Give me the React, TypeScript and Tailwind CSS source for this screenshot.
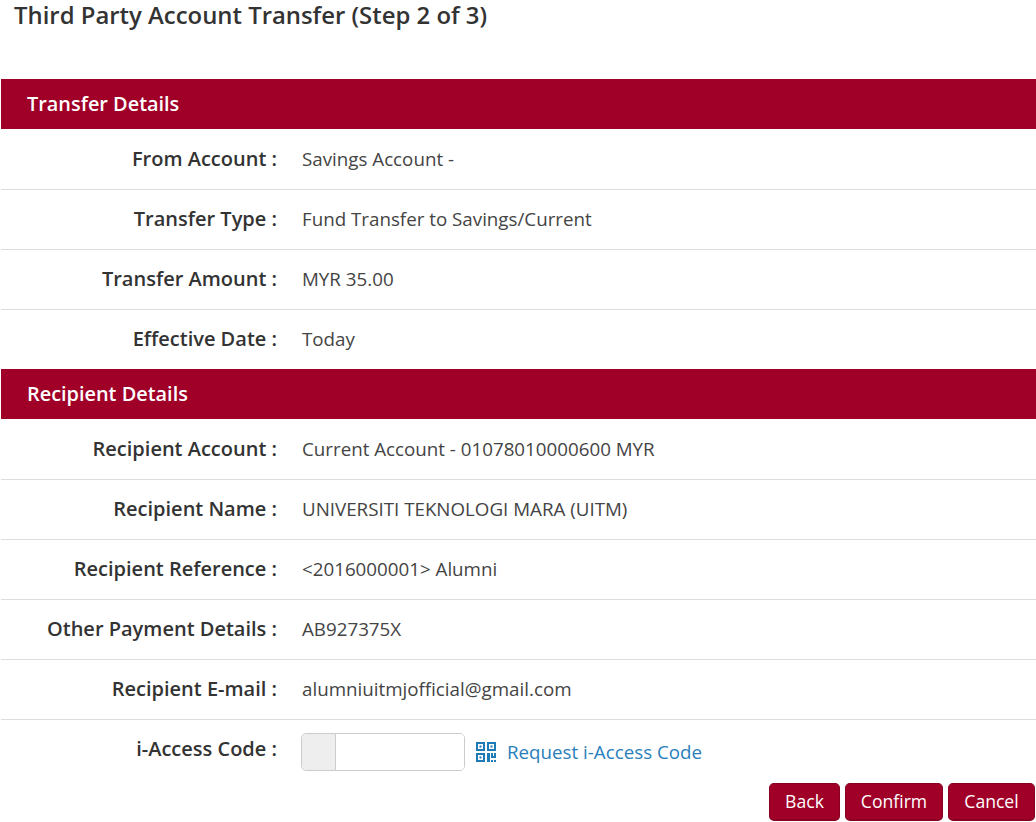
const transferRows = [
  { label: 'From Account :', value: 'Savings Account -' },
  { label: 'Transfer Type :', value: 'Fund Transfer to Savings/Current' },
  { label: 'Transfer Amount :', value: 'MYR 35.00' },
  { label: 'Effective Date :', value: 'Today' },
]

const recipientRows = [
  { label: 'Recipient Account :', value: 'Current Account - 01078010000600 MYR' },
  { label: 'Recipient Name :', value: 'UNIVERSITI TEKNOLOGI MARA (UITM)' },
  { label: 'Recipient Reference :', value: '<2016000001> Alumni' },
  { label: 'Other Payment Details :', value: 'AB927375X' },
  { label: 'Recipient E-mail :', value: 'alumniuitmjofficial@gmail.com' },
]

function SectionHeader({ title }: { title: string }) {
  return (
    <div className="flex h-[50px] items-center bg-[#a00028] pl-[26px] text-[19.9px] font-semibold text-white">
      {title}
    </div>
  )
}

function Row({ label, value, first }: { label: string; value: string; first?: boolean }) {
  return (
    <div className={`flex h-[60px] items-center ${first ? '' : 'border-t border-[#dddddd]'}`}>
      <div className={`w-[276px] text-right text-[20px] font-semibold text-[#333333] ${first ? '' : 'pb-[2px]'}`}>
        {label}
      </div>
      <div className="ml-[25px] text-[18.75px] text-[#444444]">{value}</div>
    </div>
  )
}

function QrIcon() {
  return (
    <svg width="21" height="21" viewBox="0 0 21 21" fill="#1f7ab8">
      <path fillRule="evenodd" d="M0 0h9v9H0zM2 2v5h5V2zM11 0h9v9h-9zM13 2v5h5V2zM0 11h9v9H0zM2 13v5h5v-5z" />
      <path d="M3.500 3.500h2v2h-2zM14.500 3.500h2v2h-2zM3.500 14.500h2v2h-2zM11 11h3v9h-3zM15 11h2v3h-2zM18 11h2v5h-2zM15 14h3v2h-3zM15 18h2v2h-2zM18 18h2v2h-2z" />
    </svg>
  )
}

function ActionButton({ children, width }: { children: string; width: string }) {
  return (
    <button className={`h-[38px] rounded-[5px] border border-b-2 border-[#8a0022] bg-[#a00028] text-[17.6px] text-white ${width}`}>
      {children}
    </button>
  )
}

export default function App() {
  return (
    <div className="h-[822px] w-[1036px] overflow-hidden bg-white pl-px font-['Open_Sans',sans-serif]">
      <h1 className="ml-[13px] h-[79px] text-[23.9px] leading-[29px] font-[550] text-[#333333]">
        Third Party Account Transfer (Step 2 of 3)
      </h1>

      <SectionHeader title="Transfer Details" />
      {transferRows.map((row, i) => (
        <Row key={row.label} label={row.label} value={row.value} first={i === 0} />
      ))}

      <SectionHeader title="Recipient Details" />
      {recipientRows.map((row, i) => (
        <Row key={row.label} label={row.label} value={row.value} first={i === 0} />
      ))}

      {/* i-Access code */}
      <div className="flex items-start border-t border-[#dddddd]">
        <div className="w-[276px] pt-[15px] text-right text-[20px] leading-[28px] font-semibold text-[#333333]">
          i-Access Code :
        </div>
        <div className="mt-[13px] ml-[24px] flex h-[38px] w-[164px] overflow-hidden rounded-[5px] border border-[#cccccc]">
          <div className="w-[34px] border-r border-[#cccccc] bg-[#eeeeee]" />
          <div className="flex-1 bg-white" />
        </div>
        <div className="mt-[22px] ml-[11px] flex items-start gap-[10px]">
          <QrIcon />
          <a className="-mt-px text-[18.75px] leading-[21px] text-[#2a7fba]">Request i-Access Code</a>
        </div>
      </div>

      <div className="mt-[12px] flex justify-end gap-[5px] pr-px">
        <ActionButton width="w-[71px]">Back</ActionButton>
        <ActionButton width="w-[98px]">Confirm</ActionButton>
        <ActionButton width="w-[87px]">Cancel</ActionButton>
      </div>
    </div>
  )
}
